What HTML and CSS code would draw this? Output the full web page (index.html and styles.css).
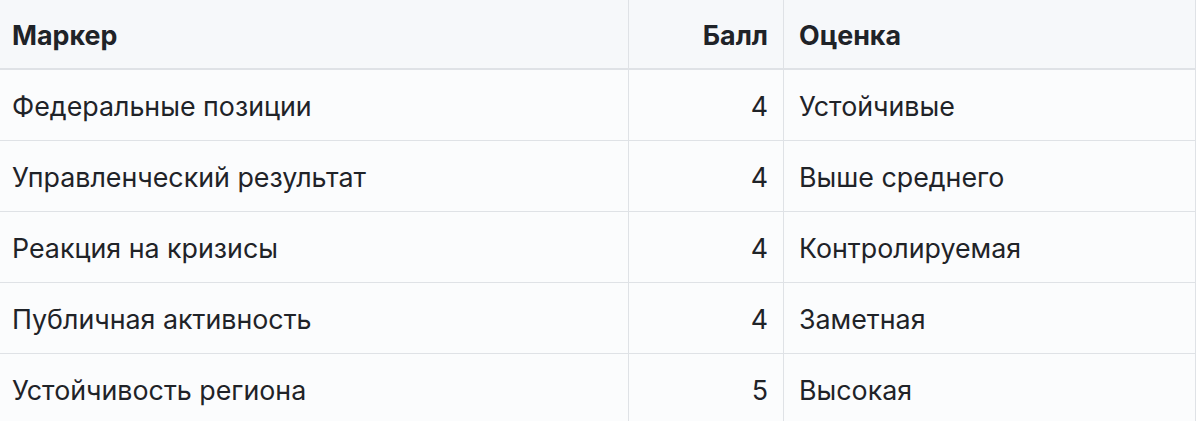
FILE: index.html
```html
<!DOCTYPE html>
<html lang="ru">
<head>
<meta charset="utf-8">
<link rel="stylesheet" href="styles.css">
</head>
<body>
<table class="grid">
  <thead>
    <tr><th class="c1">Маркер</th><th class="num c2">Балл</th><th class="c3">Оценка</th></tr>
  </thead>
  <tbody>
    <tr><td>Федеральные позиции</td><td class="num">4</td><td>Устойчивые</td></tr>
    <tr><td>Управленческий результат</td><td class="num">4</td><td>Выше среднего</td></tr>
    <tr><td>Реакция на кризисы</td><td class="num">4</td><td>Контролируемая</td></tr>
    <tr><td>Публичная активность</td><td class="num">4</td><td>Заметная</td></tr>
    <tr><td>Устойчивость региона</td><td class="num">5</td><td>Высокая</td></tr>
  </tbody>
</table>
</body>
</html>
```
FILE: styles.css
```css
html, body {
  margin: 0;
  padding: 0;
  background: #ffffff;
}
body {
  font-family: Inter, "Noto Sans", sans-serif;
  color: #1f2328;
  font-size: 26.8px;
}
.grid {
  border-collapse: collapse;
  width: 1200px;
  margin: -1px 0 0 -4px;
  table-layout: fixed;
}
.grid th, .grid td {
  border: 1px solid #dfe2e6;
  padding: 2px 15px 0;
  height: 68px;
  text-align: left;
  line-height: 30px;
}
.grid th {
  font-weight: 700;
  background: #f6f8fa;
  border-bottom: 2px solid #dfe2e6;
  height: 66px;
}
.grid td {
  background: #fbfcfd;
}
.grid .c1 { width: 601px; }
.grid .c2 { width: 124px; }
.grid .num { text-align: right; }
```
